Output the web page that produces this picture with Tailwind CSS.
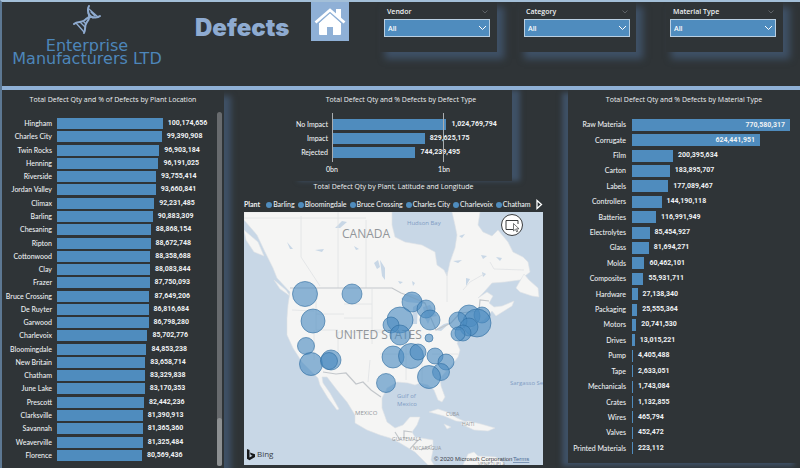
<!DOCTYPE html>
<html lang="en">
<head>
  <meta charset="UTF-8"/>
  <meta name="viewport" content="width=device-width, initial-scale=1"/>
  <title>Enterprise Manufacturers LTD - Defects</title>
  <script src="https://cdn.jsdelivr.net/npm/@tailwindcss/browser@4"></script>
</head>
<body class="min-h-screen flex flex-col bg-[#2f3437] text-[#eef1f3] text-[7px] leading-[9px] font-medium font-['Lato','Liberation_Sans',sans-serif] border-t-2 border-l-2 border-t-[#a3bfd8] border-l-[#5d7893]">

  <!-- Header -->
  <header class="flex items-start h-[84px] pr-[17px]">
    <div class="w-[170px] pt-[3px] flex flex-col items-center text-[#4d86ba]">
      <svg class="w-[30px] h-[30px]" viewBox="0 0 30 30" fill="none" stroke="#8fabd0" stroke-width="1.3" stroke-linecap="round">
        <path d="M17 1C13 7 21 11 15 17C12 20 14 25 12 28" stroke-width="2"/>
        <path d="M28 11C23 15 19 9 14 14C10 19 6 15 2 19" stroke-width="2"/>
        <path d="M17 4L26 12M16 8L21 13M4 18L12 27M8 17L13 22M11 16L14 19M19 7L23 11"/>
      </svg>
      <div class="text-center text-[16px] leading-[13px] pt-[4px] whitespace-nowrap font-normal font-['DejaVu_Sans',sans-serif]">Enterprise<br>Manufacturers LTD</div>
    </div>
    <h1 class="ml-[23px] mt-[13px] text-[24px] leading-[26px] font-black text-[#8eabd1] font-['Inter',sans-serif]">Defects</h1>
    <a href="#" aria-label="Home" class="ml-auto mr-[31px] w-[38px] h-[39px] bg-[#8fb0d6] flex justify-center items-center">
      <svg class="w-[32px] h-[28px]" viewBox="0 0 32 28" fill="#fff">
        <path d="M16 5L27 15V26Q27 27 26 27H19V19H13V27H6Q5 27 5 26V15Z"/>
        <path d="M1.500 15L16 2L30.500 15" fill="none" stroke="#8fb0d6" stroke-width="5"/>
        <path d="M1.500 14.500L16 2L30.500 14.500" fill="none" stroke="#fff" stroke-width="2.800"/>
        <path d="M22 1H27V11L22 6.500Z"/>
      </svg>
    </a>

    <!-- Slicers -->
    <div class="w-[117px] h-[50px] pl-[4px] pr-[7px] pt-[3px] bg-[#2f3437] shadow-[6px_6px_7px_1px_#3f5166] font-semibold font-['Open_Sans',sans-serif]">
      <div class="flex justify-between items-center pl-[3px] pr-[2px] h-[13px]">
        <label for="vendor">Vendor</label>
        <button aria-label="Vendor options"><svg class="w-[6px] h-[4px]" viewBox="0 0 6 4" fill="none" stroke="#6a6f73" stroke-width=".8"><path d="M.5 .5L3 3L5.500 .5"/></svg></button>
      </div>
      <div class="relative mt-px">
        <select id="vendor" class="appearance-none block w-full h-[18px] pl-[3px] bg-[#4f8cbe] border border-[#b9cfe2] text-white"><option>All</option></select>
        <svg class="absolute right-[3px] top-[6px] w-[9px] h-[6px] pointer-events-none" viewBox="0 0 9 6" fill="none" stroke="#fff"><path d="M1 1L4.500 4.500L8 1"/></svg>
      </div>
    </div>
    <div class="ml-[22px] w-[117px] h-[50px] pl-[5px] pr-[6px] pt-[3px] bg-[#2f3437] shadow-[6px_6px_7px_1px_#3f5166] font-semibold font-['Open_Sans',sans-serif]">
      <div class="flex justify-between items-center pl-[2px] pr-[2px] h-[13px]">
        <label for="category">Category</label>
        <button aria-label="Category options"><svg class="w-[6px] h-[4px]" viewBox="0 0 6 4" fill="none" stroke="#6a6f73" stroke-width=".8"><path d="M.5 .5L3 3L5.500 .5"/></svg></button>
      </div>
      <div class="relative mt-px">
        <select id="category" class="appearance-none block w-full h-[18px] pl-[3px] bg-[#4f8cbe] border border-[#b9cfe2] text-white"><option>All</option></select>
        <svg class="absolute right-[3px] top-[6px] w-[9px] h-[6px] pointer-events-none" viewBox="0 0 9 6" fill="none" stroke="#fff"><path d="M1 1L4.500 4.500L8 1"/></svg>
      </div>
    </div>
    <div class="ml-[30px] w-[117px] h-[50px] pl-[4px] pr-[7px] pt-[3px] bg-[#2f3437] shadow-[6px_6px_7px_1px_#3f5166] font-semibold font-['Open_Sans',sans-serif]">
      <div class="flex justify-between items-center pl-[3px] pr-[2px] h-[13px]">
        <label for="material">Material Type</label>
        <button aria-label="Material options"><svg class="w-[6px] h-[4px]" viewBox="0 0 6 4" fill="none" stroke="#6a6f73" stroke-width=".8"><path d="M.5 .5L3 3L5.500 .5"/></svg></button>
      </div>
      <div class="relative mt-px">
        <select id="material" class="appearance-none block w-full h-[18px] pl-[3px] bg-[#4f8cbe] border border-[#b9cfe2] text-white"><option>All</option></select>
        <svg class="absolute right-[3px] top-[6px] w-[9px] h-[6px] pointer-events-none" viewBox="0 0 9 6" fill="none" stroke="#fff"><path d="M1 1L4.500 4.500L8 1"/></svg>
      </div>
    </div>
  </header>
  <div class="h-[4px] bg-[#8fb0d6]"></div>

  <main class="flex-1 grid grid-cols-[222fr_344fr_232fr] overflow-hidden">

    <!-- Defects by plant -->
    <section class="flex flex-col bg-[#2f3437] shadow-[7px_6px_6px_0px_#3f5166]">
      <h2 class="h-[20px] leading-[20px] text-center whitespace-nowrap font-['Open_Sans',sans-serif]">Total Defect Qty and % of Defects by Plant Location</h2>
      <div class="flex-1 flex pr-[2px]">
        <div id="plants" class="flex-1 flex flex-col pt-[7px] pb-[6px]"></div>
        <div class="w-[5px] mt-[2px] mb-[2px] rounded-full bg-[#686b6e] flex items-end">
          <div class="w-full h-[48px] rounded-full bg-[#8d9092]"></div>
        </div>
      </div>
    </section>

    <section class="pl-[20px] pr-[25px] flex flex-col">
      <!-- Defects by type -->
      <div class="ml-[46px] mr-[31px] h-[91px] bg-[#2f3437] shadow-[8px_0px_5px_0px_#3f5166]">
        <h2 class="h-[20px] leading-[20px] text-center whitespace-nowrap font-['Open_Sans',sans-serif]">Total Defect Qty and % Defects by Defect Type</h2>
        <div class="relative mt-[3px] ml-[42px] mr-[68px] h-[49px] border-x border-[#a9adb0]">
          <div id="types" class="-ml-[42px] -mr-[68px] pt-[4px]"></div>
          <div class="absolute inset-y-0 -right-px w-px bg-[#a9adb0]"></div>
        </div>
        <div class="flex justify-between ml-[36px] mr-[62px] pt-[3px]"><span>0bn</span><span>1bn</span></div>
      </div>

      <!-- Map -->
      <h2 class="h-[12px] leading-[12px] text-center whitespace-nowrap font-['Open_Sans',sans-serif]">Total Defect Qty by Plant, Latitude and Longitude</h2>
      <div class="flex items-center h-[19px] pt-[4px] whitespace-nowrap">
        <span class="font-bold mr-[6px]">Plant</span>
        <ul id="legend" class="flex flex-1 gap-[3px]"></ul>
        <button aria-label="Next"><svg class="w-[7px] h-[11px]" viewBox="0 0 7 11" fill="none" stroke="#fff" stroke-width="1.300"><path d="M1 1.500V9.500L5.500 5.500Z"/></svg></button>
      </div>
      <svg class="block w-full" viewBox="0 0 299 253" font-family="Open Sans, sans-serif">
        <rect width="299" height="253" fill="#c8d7e6"/>
        <g fill="#f5f5f4" stroke="#dfe3e6" stroke-width=".6">
          <path d="M0 0H148V13L151 25L161 30L178 33L191 40L193 53L200 58L203 64L206 50L211 36L213 23L211 13L208 0H236L234 13L239 20L248 24L254 18L264 30L269 40L279 45L284 50L286 60L276 68L261 70L248 71L240 80L234 86L243 80L249 84L245 91L250 95L258 94L270 89L268 94L252 104L248 99L240 108L231 113L222 122L213 131L216 138L214 145L206 155L196 166L197 174L201 185L198 190L194 188L190 178L184 173L176 171L171 173L164 171L153 170L143 176L138 186L138 196L143 210L151 216L159 213L166 205L176 205L173 213L168 220L171 225L189 228L189 238L187 248L190 253H184L171 240L156 231L146 226L136 223L123 218L111 211L111 203L103 190L93 178L83 165L78 165L79 171L86 181L95 197L93 198L84 186L76 173L74 166L68 160L58 150L49 136L43 123L43 106L44 93L46 80L33 66L29 56L21 40L13 23L0 8Z"/>
          <path d="M272 76L280 62L285 68L294 76L295 85L288 84L276 80Z"/>
          <path d="M185 200L194 197L203 200L213 206L222 210L212 209L200 204Z"/>
          <path d="M217 212L224 209L237 212L251 216L244 219L230 218Z"/>
          <path d="M0 18L14 30L20 44L10 40L2 28ZM30 68L42 78L46 84L36 77ZM200 212L207 215L203 217Z"/>
          <path d="M219 253L224 242L230 240L234 244L252 245L262 253Z"/>
        </g>
        <!-- lakes -->
        <g fill="#c8d7e6">
          <path d="M91 16L98 9L103 10L96 16ZM130 51L134 48L136 55L133 57ZM136 48L141 56L141 68L138 64ZM71 38L80 37L78 40ZM43 30L49 37L46 37ZM110 34L115 37L112 38ZM209 49L218 48L214 51ZM237 43L243 44L239 47ZM252 45L258 46L256 49ZM222 66L226 67L222 74ZM238 60L242 62L239 65ZM215 24L221 22L218 26ZM154 69L159 70L156 72ZM168 69L171 71L169 74Z"/>
          <path d="M157 87L164 81L175 84L182 92L173 91L163 90ZM169 95L174 92L173 112L168 112ZM179 95L186 93L193 104L187 105L184 112L181 106ZM191 118L200 112L207 110L197 119Z"/>
        </g>
        <g fill="none" stroke="#e0e2e4" stroke-width=".8">
          <path d="M57 4V45L76 74M94 0V76M122 8V76M0 6H122M48 98L70 99M72 78V102H100M72 102V118H94M94 120V142M94 120H140M70 118V148M100 92H128M100 106H128M128 77V132M130 118H166M136 142H166M188 142H214M162 112V168M178 138V170M203 60V90M219 78L226 70L240 62M246 50L250 57L280 58M126 148L124 170"/>
          <path d="M46 76H148L157 81L165 84L181 91L186 104L192 118L207 111L216 101L235 99L236 88L245 89" stroke="#c3c7cb" stroke-width="1.200"/>
          <path d="M79 160L92 162L102 161L112 172L119 170L127 178L137 185M151 220L156 228M168 220L160 219V228M174 228L166 237M188 233L177 238" stroke="#c3c7cb" stroke-width="1.200"/>
        </g>
        <g fill="#92969a">
          <text x="98" y="26" font-size="12">CANADA</text>
          <text x="91" y="127" font-size="12">UNITED STATES</text>
          <text x="111" y="203" font-size="6">MEXICO</text>
          <text x="148" y="229" font-size="5">GUATEMALA</text>
          <text x="169" y="238" font-size="5">NICARAGUA</text>
          <text x="202" y="204" font-size="5">CUBA</text>
          <text x="218" y="214" font-size="5">HAITI</text>
          <text x="234" y="254" font-size="5">VENEZUELA</text>
        </g>
        <g fill="#7f9cc4" font-size="6">
          <text x="163" y="13">Hudson Bay</text>
          <text x="153" y="186">Gulf of</text>
          <text x="153" y="194">Mexico</text>
          <text x="266" y="173">Sargasso Sea</text>
        </g>
        <g id="bubbles" fill="#4a8bc0" fill-opacity=".62" stroke="#2e6b9f" stroke-opacity=".75" stroke-width=".8"></g>
        <!-- select mode -->
        <circle cx="268" cy="13" r="10.500" fill="#fff" stroke="#3b3d3f"/>
        <path d="M269 17.500H262V8.500H274V12" fill="none" stroke="#3b3d3f"/>
        <path d="M269.500 11.500V19L271.300 17.300L272.800 20L273.800 19.400L272.500 16.800H275Z" fill="#fff" stroke="#3b3d3f" stroke-width=".7"/>
        <path d="M3 237L5.500 238V245.500L8.500 243.700L6.800 243L5.900 240.600L11 242.300V245L5.500 248.300L3 246.700Z" fill="#17191b"/>
        <text x="13" y="245" font-size="8" fill="#3b4148">Bing</text>
        <text x="190" y="249" font-size="6" fill="#3b4148" font-family="Liberation Sans">© 2020 Microsoft Corporation</text>
        <a href="#"><text x="269" y="249" font-size="6" fill="#4a6a94" text-decoration="underline" font-family="Liberation Sans">Terms</text></a>
      </svg>
    </section>

    <!-- Defects by material -->
    <section class="flex flex-col mb-[5px] bg-[#2f3437] shadow-[-6px_3px_5px_0px_#3f5166]">
      <h2 class="h-[20px] leading-[20px] text-center whitespace-nowrap font-['Open_Sans',sans-serif]">Total Defect Qty and % Defects by Material Type</h2>
      <div id="materials" class="flex-1 flex flex-col pt-[7px] pb-[7px] pr-[10px]"></div>
    </section>
  </main>

  <script>
    const plants = [
      ['Hingham', 100174656], ['Charles City', 99390908], ['Twin Rocks', 96903184], ['Henning', 96191025],
      ['Riverside', 93755414], ['Jordan Valley', 93660841], ['Climax', 92231485], ['Barling', 90883309],
      ['Chesaning', 88868154], ['Ripton', 88672748], ['Cottonwood', 88358688], ['Clay', 88083844],
      ['Frazer', 87750093], ['Bruce Crossing', 87649206], ['De Ruyter', 86816684], ['Garwood', 86798280],
      ['Charlevoix', 85702776], ['Bloomingdale', 84853238], ['New Britain', 83658714], ['Chatham', 83329838],
      ['June Lake', 83170353], ['Prescott', 82442236], ['Clarksville', 81390913], ['Savannah', 81365360],
      ['Weaverville', 81325484], ['Florence', 80569436]
    ]
    const types = [['No Impact', 1024769794], ['Impact', 829625175], ['Rejected', 744239495]]
    const materials = [
      ['Raw Materials', 770580317], ['Corrugate', 624441951], ['Film', 200395634], ['Carton', 183895707],
      ['Labels', 177089467], ['Controllers', 144190118], ['Batteries', 116991949], ['Electrolytes', 85454927],
      ['Glass', 81694271], ['Molds', 60462101], ['Composites', 55931711], ['Hardware', 27138340],
      ['Packaging', 25555364], ['Motors', 20741530], ['Drives', 13015221], ['Pump', 4405488],
      ['Tape', 2633051], ['Mechanicals', 1743084], ['Crates', 1132855], ['Wires', 465794],
      ['Valves', 452472], ['Printed Materials', 223112]
    ]
    // x, y, radius on the map
    const bubbles = [
      [61, 82, 12.5], [108, 82, 10], [69, 109, 12], [62, 134, 8.5], [67, 152, 11.5], [87, 148, 10], [85, 149, 8.5],
      [142, 171, 9.5], [149, 145, 11], [167, 144, 12.5], [174, 140, 8], [185, 126, 4], [191, 144, 8], [202, 150, 8],
      [197, 160, 8.5], [185, 165, 11.5], [168, 90, 10], [182, 97, 9], [186, 108, 10], [156, 108, 13], [147, 113, 8],
      [156, 123, 10], [225, 104, 11], [238, 103, 8], [233, 111, 14], [214, 109, 9], [225, 115, 9], [219, 121, 8], [214, 122, 7]
    ]

    // full = value that fills the whole track
    function drawPlants() {
      const full = 151700000
      document.getElementById('plants').innerHTML = plants.map(([name, v]) => `
        <div class="flex-1 flex items-center min-h-[12px]">
          <span class="w-[50px] text-right whitespace-nowrap">${name}</span>
          <div class="flex-1 flex items-center ml-[5px]">
            <div class="h-[11px] bg-[#4f8cbe]" style="width:${v / full * 100}%"></div>
            <span class="ml-[5px] w-0 font-bold font-['Roboto',sans-serif]">${v.toLocaleString('en-US')}</span>
          </div>
        </div>`).join('')
    }

    function drawTypes() {
      const full = 1608000000
      document.getElementById('types').innerHTML = types.map(([name, v]) => `
        <div class="flex items-center h-[14px]">
          <span class="w-[37px] text-right whitespace-nowrap">${name}</span>
          <div class="flex-1 flex items-center ml-[5px]">
            <div class="h-[11px] bg-[#4f8cbe]" style="width:${v / full * 100}%"></div>
            <span class="ml-[5px] w-0 font-bold font-['Roboto',sans-serif]">${v.toLocaleString('en-US')}</span>
          </div>
        </div>`).join('')
    }

    function drawMaterials() {
      const full = 770580317
      document.getElementById('materials').innerHTML = materials.map(([name, v]) => {
        const label = v.toLocaleString('en-US')
        const inside = v > full / 2
        return `
        <div class="flex-1 flex items-center min-h-[13px]">
          <span class="w-[58px] text-right whitespace-nowrap">${name}</span>
          <div class="flex-1 flex items-center ml-[6px] font-bold font-['Roboto',sans-serif]">
            <div class="h-[12px] leading-[13px] min-w-px bg-[#4f8cbe] text-right" style="width:${v / full * 100}%">${inside ? `<span class="mr-[5px]">${label}</span>` : ''}</div>
            ${inside ? '' : `<span class="ml-[5px]">${label}</span>`}
          </div>
        </div>`
      }).join('')
    }

    drawPlants()
    drawTypes()
    drawMaterials()
    document.getElementById('legend').innerHTML = ['Barling', 'Bloomingdale', 'Bruce Crossing', 'Charles City', 'Charlevoix', 'Chatham']
      .map(n => `<li class="flex items-center gap-px"><i class="w-[6px] h-[6px] rounded-full bg-[#4f8cbe]"></i>${n}</li>`).join('')
    document.getElementById('bubbles').innerHTML = bubbles.map(([x, y, r]) => `<circle cx="${x}" cy="${y}" r="${r}"/>`).join('')
  </script>
</body>
</html>
